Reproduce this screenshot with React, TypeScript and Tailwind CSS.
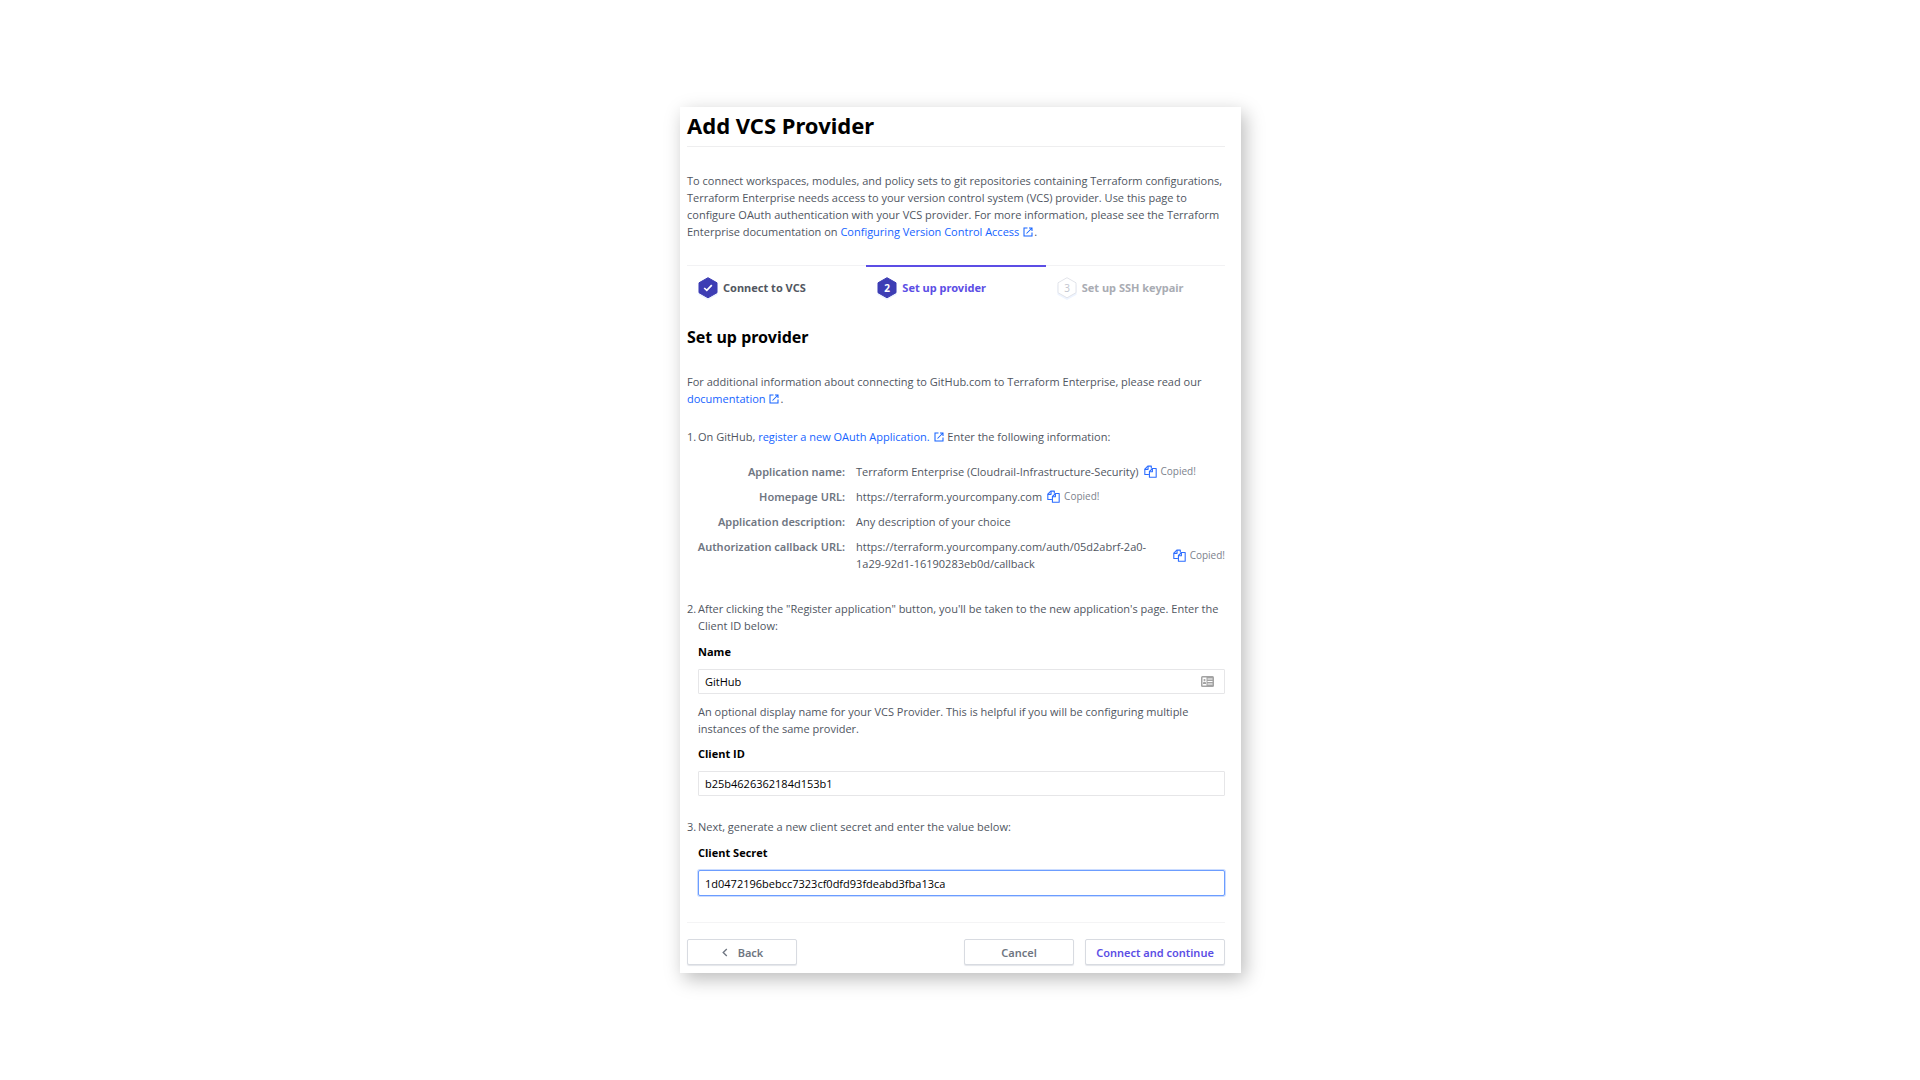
import type { ReactNode } from 'react';

function ExternalIcon() {
  return (
    <svg viewBox="0 0 24 24" className="inline-block size-3 align-[-2px]" fill="none" stroke="currentColor" strokeWidth="2.1" aria-hidden="true">
      <path d="M11 4H4v16h16v-7" />
      <path d="M14 4h6v6M20 4L9 15" />
    </svg>
  );
}

function ExternalLink({ children }: { children: ReactNode }) {
  return (
    <a href="#" className="text-[#1563ff]">
      {children} <ExternalIcon />
    </a>
  );
}

function CopyButton({ label }: { label: string }) {
  return (
    <span className="flex shrink-0 items-center gap-1">
      <button type="button" aria-label={`Copy ${label}`} className="text-[#2b6cff]">
        <svg viewBox="0 0 24 24" className="block size-[13px]" fill="none" stroke="currentColor" strokeWidth="2" strokeLinejoin="round" aria-hidden="true">
          <path d="M9 17.500H1.500V7.500L7 2H13.500v4.500" />
          <path d="M7.500 2v6H1.500" />
          <path d="M15.500 6.500H22.500V22.500H10V12z" />
          <path d="M15.500 6.500V12.500H10" />
        </svg>
      </button>
      <span className="text-[10px] text-[#7c828d]">Copied!</span>
    </span>
  );
}

type StepState = 'done' | 'active' | 'todo';

function Hexagon({ state, number }: { state: StepState; number: number }) {
  const todo = state === 'todo';
  return (
    <svg viewBox="0 0 20 24" className="h-6 w-5 shrink-0" aria-hidden="true">
      <path d="M10 3l9.500 5.300v9.400L10 23l-9.500-5.300V8.300z" fill="#eef4ff" />
      <path
        d="M10 .7l9 5.100v9.900l-9 5.100-9-5.100V5.800z"
        fill={todo ? '#fff' : '#3d3db4'}
        stroke={todo ? '#e2e4ea' : '#3d3db4'}
        strokeWidth="1"
        strokeLinejoin="round"
      />
      {state === 'done' ? (
        <path d="M6.200 11l2.600 2.400 5-5.300" fill="none" stroke="#fff" strokeWidth="1.700" />
      ) : (
        <text x="10" y="14.500" textAnchor="middle" fontSize="10" fontWeight={todo ? 400 : 700} fill={todo ? '#c4c7d0' : '#fff'}>
          {number}
        </text>
      )}
    </svg>
  );
}

const steps: { label: string; state: StepState; bar: string; text: string }[] = [
  { label: 'Connect to VCS', state: 'done', bar: 'border-t border-[#f2f2f4] pt-[11px]', text: 'text-[#525761]' },
  { label: 'Set up provider', state: 'active', bar: 'border-t-2 border-[#5c4ee5] pt-[10px]', text: 'text-[#5c4ee5]' },
  { label: 'Set up SSH keypair', state: 'todo', bar: 'border-t border-[#f2f2f4] pt-[11px]', text: 'text-[#a9acb3]' },
];

const details = [
  { term: 'Application name:', value: 'Terraform Enterprise (Cloudrail-Infrastructure-Security)', copy: true },
  { term: 'Homepage URL:', value: 'https://terraform.yourcompany.com', copy: true },
  { term: 'Application description:', value: 'Any description of your choice', copy: false },
  { term: 'Authorization callback URL:', value: 'https://terraform.yourcompany.com/auth/05d2abrf-2a0-1a29-92d1-16190283eb0d/callback', copy: true },
];

function Item({ n, className, children }: { n: number; className: string; children: ReactNode }) {
  return (
    <li className={`grid grid-cols-[11px_minmax(0,1fr)] ${className}`}>
      <span className="whitespace-nowrap">{n}.</span>
      <div>{children}</div>
    </li>
  );
}

const labelClass = 'block font-bold text-black';
const inputClass = 'block w-full rounded-[1px] border border-[#e6e6e8] bg-white px-[6px] text-black outline-none';
const buttonClass =
  "flex h-[26px] items-center justify-center rounded-[2px] border border-[#d8dbe1] bg-white font-['Noto_Sans',sans-serif] font-semibold shadow-[0_1px_1px_#e4e6ea]";

export default function App() {
  return (
    <main className="flex min-h-screen items-start justify-center bg-white pt-[107px] pb-[107px] pl-px font-['Open_Sans',sans-serif] text-[11px] leading-[17px] text-[#50565f]">
      <form className="w-full max-w-[561px] bg-white pt-1 pr-4 pb-2 pl-[7px] shadow-[4px_6px_18px_rgba(0,0,0,0.27)]">
        <h1 className="border-b border-[#eeeeef] pb-[7px] font-['Noto_Sans',sans-serif] text-[22px] leading-7 font-bold text-black">Add VCS Provider</h1>
        <p className="mt-[25px]">
          To connect workspaces, modules, and policy sets to git repositories containing Terraform configurations, Terraform Enterprise needs access to your
          version control system (VCS) provider. Use this page to configure OAuth authentication with your VCS provider. For more information, please see the
          Terraform Enterprise documentation on <ExternalLink>Configuring Version Control Access</ExternalLink>.
        </p>

        <ol className="mt-[25px] grid grid-cols-3 font-['Noto_Sans',sans-serif]">
          {steps.map((s, i) => (
            <li key={s.label} className={`flex items-start gap-[5px] pl-[11px] ${s.bar}`}>
              <Hexagon state={s.state} number={i + 1} />
              <span className={`pt-[2px] font-bold ${s.text}`}>{s.label}</span>
            </li>
          ))}
        </ol>

        <h2 className="mt-6 font-['Noto_Sans',sans-serif] text-[16px] leading-6 font-bold text-black">Set up provider</h2>
        <p className="mt-6">
          For additional information about connecting to GitHub.com to Terraform Enterprise, please read our{' '}
          <ExternalLink>documentation</ExternalLink>.
        </p>

        <ol>
          <Item n={1} className="mt-[21px]">
            <p>
              On GitHub, <ExternalLink>register a new OAuth Application.</ExternalLink> Enter the following information:
            </p>
            <dl className="mt-[18px] grid grid-cols-[147px_minmax(0,1fr)] gap-x-[11px] gap-y-2">
              {details.map((d) => (
                <div key={d.term} className="contents">
                  <dt className="flex justify-end font-['Noto_Sans',sans-serif] font-semibold whitespace-nowrap text-[#6f7682]">{d.term}</dt>
                  <dd className="flex items-center gap-[5px]">
                    <span>{d.value}</span>
                    {d.copy && <CopyButton label={d.term} />}
                  </dd>
                </div>
              ))}
            </dl>
          </Item>

          <Item n={2} className="mt-7">
            <p className="-mr-2">After clicking the "Register application" button, you'll be taken to the new application's page. Enter the Client ID below:</p>
            <label htmlFor="name" className={`mt-[9px] ${labelClass}`}>
              Name
            </label>
            <div className="relative mt-[9px]">
              <input id="name" defaultValue="GitHub" className={`h-[25px] ${inputClass}`} />
              <svg viewBox="0 0 13 11" className="absolute top-[7px] right-[11px] h-[11px] w-[13px]" aria-hidden="true">
                <rect width="13" height="11" rx="1.500" fill="#a3a3a3" />
                <path d="M1.500 1.500h4v8h-4z" fill="#fff" />
                <circle cx="3.500" cy="4" r="1.100" fill="#a3a3a3" />
                <path d="M2 8V7c0-1.600 3-1.600 3 0v1z" fill="#a3a3a3" />
                <path d="M6.500 3h5M6.500 5.500h5M6.500 8h5" stroke="#fff" strokeWidth="1" />
              </svg>
            </div>
            <p className="mt-[9px]">An optional display name for your VCS Provider. This is helpful if you will be configuring multiple instances of the same provider.</p>
            <label htmlFor="client-id" className={`mt-2 ${labelClass}`}>
              Client ID
            </label>
            <input id="client-id" defaultValue="b25b4626362184d153b1" className={`mt-[9px] h-[25px] ${inputClass}`} />
          </Item>

          <Item n={3} className="mt-[22px]">
            <p>Next, generate a new client secret and enter the value below:</p>
            <label htmlFor="client-secret" className={`mt-[9px] ${labelClass}`}>
              Client Secret
            </label>
            <input
              id="client-secret"
              defaultValue="1d0472196bebcc7323cf0dfd93fdeabd3fba13ca"
              className="mt-[9px] block h-[26px] w-full rounded-[2px] border border-[#6c9dff] bg-white px-[6px] text-black shadow-[0_0_0_1px_#cbdcff] outline-none"
            />
          </Item>
        </ol>

        <div className="mt-[26px] flex gap-[11px] border-t border-[#f4f4f5] pt-4">
          <button type="button" className={`mr-auto w-[110px] gap-[9px] text-[#6f7682] ${buttonClass}`}>
            <svg viewBox="0 0 8 10" className="h-[9px] w-2" fill="none" stroke="currentColor" strokeWidth="1.500" aria-hidden="true">
              <path d="M6 1L2 5l4 4" />
            </svg>
            Back
          </button>
          <button type="button" className={`w-[110px] text-[#6f7682] ${buttonClass}`}>
            Cancel
          </button>
          <button type="submit" className={`w-[140px] text-[#5c4ee5] ${buttonClass}`}>
            Connect and continue
          </button>
        </div>
      </form>
    </main>
  );
}
